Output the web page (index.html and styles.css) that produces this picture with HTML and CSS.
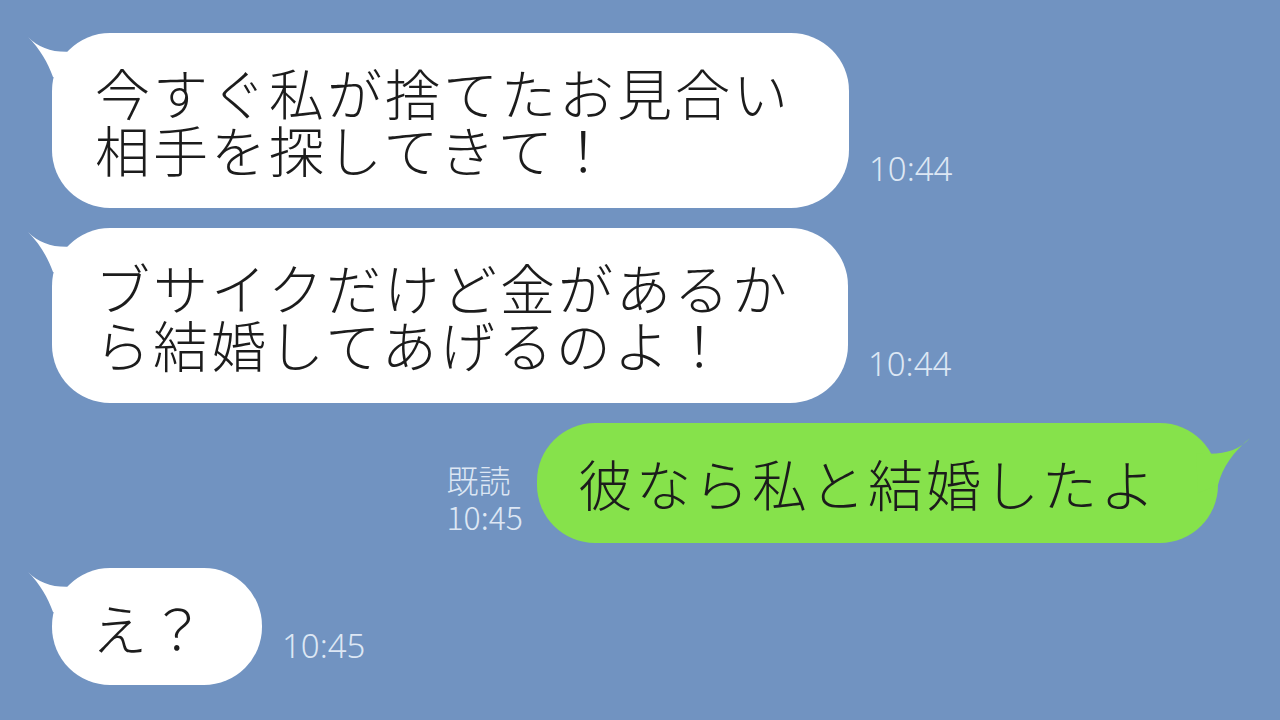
FILE: index.html
```html
<!DOCTYPE html>
<html lang="ja">
<head>
    <meta charset="UTF-8" />
    <title>トーク</title>
    <link rel="stylesheet" href="styles.css">
</head>
<body>
    <div class="chat">
        <div class="row">
            <div class="bubble">
                <svg class="tail tail-left" viewBox="-30 0 60 60"><path d="M-24,4 C-12,16 4,21 26,18 L22,50 L1,44 C-4,30 -12,16 -24,4 Z"/></svg>
                今すぐ私が捨てたお見合い<br>相手を探してきて！
            </div>
            <div class="meta">10:44</div>
        </div>

        <div class="row">
            <div class="bubble">
                <svg class="tail tail-left" viewBox="-30 0 60 60"><path d="M-24,4 C-12,16 4,21 26,18 L22,50 L1,44 C-4,30 -12,16 -24,4 Z"/></svg>
                ブサイクだけど金があるか<br>ら結婚してあげるのよ！
            </div>
            <div class="meta">10:44</div>
        </div>

        <div class="row row-mine">
            <div class="meta meta-mine">既読<br>10:45</div>
            <div class="bubble bubble-mine">
                <svg class="tail tail-right" viewBox="-30 0 60 60"><path d="M32,15 C20,28 4,33 -22,30 L-20,70 L0,62 C4,45 16,28 32,15 Z"/></svg>
                彼なら私と結婚したよ
            </div>
        </div>

        <div class="row row-last">
            <div class="bubble bubble-short">
                <svg class="tail tail-left" viewBox="-30 0 60 60"><path d="M-24,4 C-12,16 4,21 26,18 L22,50 L1,44 C-4,30 -12,16 -24,4 Z"/></svg>
                え？
            </div>
            <div class="meta">10:45</div>
        </div>
    </div>
</body>
</html>
```

FILE: styles.css
```css
* {
    box-sizing: border-box;
    margin: 0;
    padding: 0;
}

body {
    width: 1280px;
    height: 720px;
    overflow: hidden;
    background: #7193c1;
    font-family: "Noto Sans CJK JP", "Noto Sans", sans-serif;
    color: #1c1c1c;
}

.chat {
    display: flex;
    flex-direction: column;
    gap: 20px;
    padding: 33px 62px 0 52px;
}

.row {
    display: flex;
    align-items: flex-end;
    gap: 20px;
}

.row-mine {
    justify-content: flex-end;
    gap: 14px;
}

.row-last {
    margin-top: 5px;
}

.bubble {
    position: relative;
    background: #ffffff;
    border-radius: 58px;
    padding: 30px 58px 31px 43px;
    font-size: 55px;
    font-weight: 300;
    line-height: 57px;
    letter-spacing: 3px;
    white-space: nowrap;
}

.bubble-mine {
    background: #86e24b;
    padding: 31px 60px 32px 41px;
}

.bubble-short {
    padding: 30px 54px 30px 40px;
}

.tail {
    position: absolute;
    top: 0;
    width: 60px;
    height: 60px;
    overflow: visible;
}

.tail-left {
    left: -30px;
    fill: #ffffff;
}

.tail-right {
    right: -30px;
    fill: #86e24b;
}

.meta {
    font-family: "Noto Sans", sans-serif;
    font-size: 33px;
    font-weight: 300;
    line-height: 35px;
    color: #dde7f4;
    padding-bottom: 22px;
    white-space: nowrap;
}

.meta-mine {
    font-family: "Noto Sans CJK JP", sans-serif;
    font-size: 32px;
    line-height: 37px;
    padding-bottom: 8px;
}
```
